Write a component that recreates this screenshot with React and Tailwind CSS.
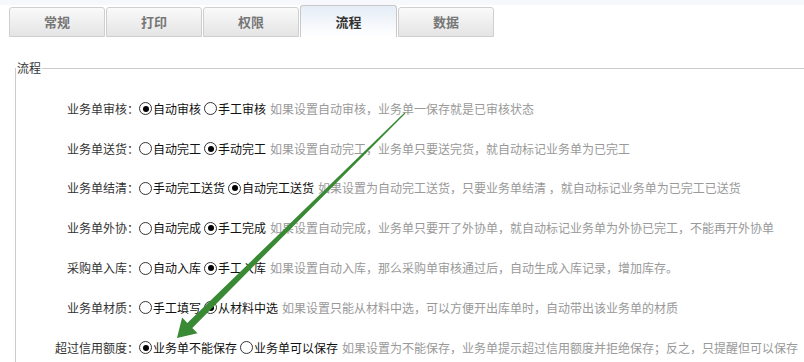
import React from "react";

const tabs = ["常规", "打印", "权限", "流程", "数据"];

const rows = [
    { label: "业务单审核：", options: ["自动审核", "手工审核"], checked: 0, hint: "如果设置自动审核，业务单一保存就是已审核状态" },
    { label: "业务单送货：", options: ["自动完工", "手动完工"], checked: 1, hint: "如果设置自动完工，业务单只要送完货，就自动标记业务单为已完工" },
    { label: "业务单结清：", options: ["手动完工送货", "自动完工送货"], checked: 1, hint: "如果设置为自动完工送货，只要业务单结清 ，就自动标记业务单为已完工已送货" },
    { label: "业务单外协：", options: ["自动完成", "手工完成"], checked: 1, hint: "如果设置自动完成，业务单只要开了外协单，就自动标记业务单为外协已完工，不能再开外协单" },
    { label: "采购单入库：", options: ["自动入库", "手工入库"], checked: 1, hint: "如果设置自动入库，那么采购单审核通过后，自动生成入库记录，增加库存。" },
    { label: "业务单材质：", options: ["手工填写", "从材料中选"], checked: 1, hint: "如果设置只能从材料中选，可以方便开出库单时，自动带出该业务单的材质" },
    { label: "超过信用额度：", options: ["业务单不能保存", "业务单可以保存"], checked: 0, hint: "如果设置为不能保存，业务单提示超过信用额度并拒绝保存；反之，只提醒但可以保存" },
];

function Radio({ on }) {
    return (
        <span className="inline-flex items-center justify-center w-[13px] h-[13px] rounded-full border border-[#333] bg-white shrink-0 mr-[1px]">
            {on && <span className="w-[6px] h-[6px] rounded-full bg-black" />}
        </span>
    );
}

export default function App() {
    return (
        <div className="relative w-[804px] h-[362px] overflow-hidden bg-white text-[12px] [font-family:'Noto_Sans_CJK_SC','Noto_Sans',sans-serif]">
            <div className="h-[5px] bg-[#f6f8fb]" />

            <div className="flex items-end h-[32px] pl-[9px] gap-[1px]">
                {tabs.map((t, i) => (
                    <div
                        key={t}
                        className={
                            i === 3
                                ? "w-[97px] h-[32px] flex items-center justify-center rounded-t-[3px] border border-b-0 border-[#c8c8c8] bg-gradient-to-b from-[#e6edf7] to-white text-[13px] font-bold text-[#333]"
                                : "w-[96px] h-[30px] flex items-center justify-center rounded-t-[3px] border border-[#cfcfcf] bg-gradient-to-b from-[#fafafa] to-[#e4e4e4] text-[13px] font-bold text-[#777]"
                        }
                    >
                        {t}
                    </div>
                ))}
            </div>

            <fieldset className="ml-[15px] mt-[23px] w-[820px] h-[340px] border border-[#cccccc]">
                <legend className="px-[1px] text-[12px] leading-[16px] text-[#333]">流程</legend>
                <div className="pt-[13px]">
                    {rows.map((r) => (
                        <div key={r.label} className="flex items-center h-[39.8px] whitespace-nowrap leading-[16px]">
                            <span className="w-[123px] text-right text-[#333]">{r.label}</span>
                            <Radio on={r.checked === 0} />
                            <span className="text-[#111]">{r.options[0]}</span>
                            <span className="w-[3px]" />
                            <Radio on={r.checked === 1} />
                            <span className="text-[#111]">{r.options[1]}</span>
                            <span className="ml-[4px] text-[#999]">{r.hint}</span>
                        </div>
                    ))}
                </div>
            </fieldset>

            <svg className="absolute inset-0 pointer-events-none" width="804" height="362" viewBox="0 0 804 362">
                <polygon
                    fill="#3a8a35"
                    points="404.6,112.6 187.3,322.9 182.1,317.6 177,338 197.5,333.2 192.3,327.9 405.4,113.4"
                />
            </svg>
        </div>
    );
}
